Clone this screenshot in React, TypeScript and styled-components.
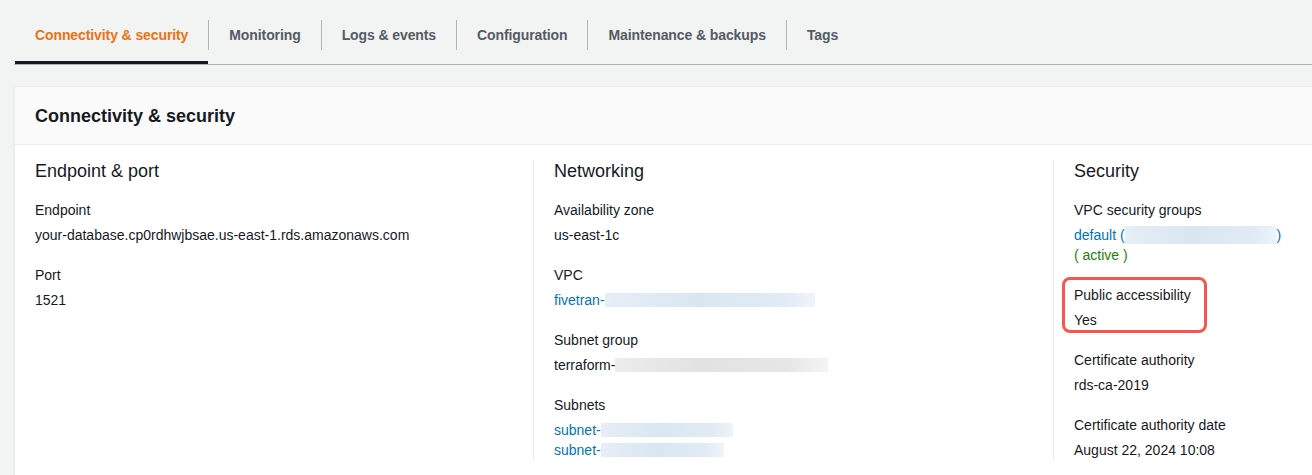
import React from "react";
import styled, { createGlobalStyle } from "styled-components";

const GlobalStyle = createGlobalStyle`
  body {
    margin: 0;
    background: #f2f3f3;
    font-family: "Liberation Sans", Arial, sans-serif;
    color: #16191f;
    overflow: hidden;
  }
`;

const tabs = [
  "Connectivity & security",
  "Monitoring",
  "Logs & events",
  "Configuration",
  "Maintenance & backups",
  "Tags",
];

type Blur = { w: number; h?: number; tone?: "blue" | "gray" };

export default function App() {
  return (
    <>
      <GlobalStyle />
      <Page>
        <TabBar>
          {tabs.map((t, i) => (
            <React.Fragment key={t}>
              {i > 0 && <TabDivider />}
              <Tab active={i === 0}>{t}</Tab>
            </React.Fragment>
          ))}
        </TabBar>

        <Card>
          <CardHeader>
            <CardTitle>Connectivity &amp; security</CardTitle>
          </CardHeader>
          <CardBody>
            <Column>
              <ColumnTitle>Endpoint &amp; port</ColumnTitle>
              <Fields>
                <Field>
                  <Label>Endpoint</Label>
                  <Value>your-database.cp0rdhwjbsae.us-east-1.rds.amazonaws.com</Value>
                </Field>
                <Field>
                  <Label>Port</Label>
                  <Value>1521</Value>
                </Field>
              </Fields>
            </Column>

            <Column divided>
              <ColumnTitle>Networking</ColumnTitle>
              <Fields>
                <Field>
                  <Label>Availability zone</Label>
                  <Value>us-east-1c</Value>
                </Field>
                <Field>
                  <Label>VPC</Label>
                  <Value>
                    <Link>
                      fivetran-
                      <Redacted w={210} />
                    </Link>
                  </Value>
                </Field>
                <Field>
                  <Label>Subnet group</Label>
                  <Value>
                    <Line>
                      terraform-
                      <Redacted w={213} tone="gray" />
                    </Line>
                  </Value>
                </Field>
                <Field>
                  <Label>Subnets</Label>
                  <Value>
                    <Link>
                      subnet-
                      <Redacted w={132} />
                    </Link>
                    <Link>
                      subnet-
                      <Redacted w={123} />
                    </Link>
                  </Value>
                </Field>
              </Fields>
            </Column>

            <Column divided>
              <ColumnTitle>Security</ColumnTitle>
              <Fields>
                <Field>
                  <Label>VPC security groups</Label>
                  <Value>
                    <Link>
                      default (
                      <Redacted w={152} h={18} />)
                    </Link>
                    <Status>( active )</Status>
                  </Value>
                </Field>
                <Highlight>
                  <Label>Public accessibility</Label>
                  <Value>Yes</Value>
                </Highlight>
                <Field>
                  <Label>Certificate authority</Label>
                  <Value>rds-ca-2019</Value>
                </Field>
                <Field>
                  <Label>Certificate authority date</Label>
                  <Value>August 22, 2024 10:08</Value>
                </Field>
              </Fields>
            </Column>
          </CardBody>
        </Card>
      </Page>
    </>
  );
}

// --- Styled Components ---
const Page = styled.div`
  padding-left: 14px;
  overflow: hidden;
`;

const TabBar = styled.div`
  display: flex;
  align-items: flex-start;
  height: 65px;
  box-sizing: border-box;
  padding-left: 1px;
  border-bottom: 1px solid #aab7b8;
`;

const Tab = styled.div<{ active?: boolean }>`
  box-sizing: border-box;
  height: 64px;
  padding: 25px 20px 0 20px;
  font-size: 14px;
  line-height: 20px;
  font-weight: 700;
  letter-spacing: -0.1px;
  white-space: nowrap;
  color: ${(p) => (p.active ? "#ec7211" : "#545b64")};
  border-bottom: 3px solid ${(p) => (p.active ? "#16191f" : "transparent")};
`;

const TabDivider = styled.div`
  width: 1px;
  height: 30px;
  margin-top: 20px;
  background: #aab7b8;
`;

const Card = styled.div`
  margin-top: 21px;
  border-top: 1px solid #eaeded;
  border-left: 1px solid #eaeded;
  box-shadow: 0 1px 1px rgba(0, 28, 36, 0.1);
  background: #fff;
`;

const CardHeader = styled.div`
  display: flex;
  align-items: center;
  height: 57px;
  padding: 0 20px;
  background: #fafafa;
  border-bottom: 1px solid #eaeded;
`;

const CardTitle = styled.h2`
  margin: 0;
  font-size: 18px;
  line-height: 22px;
  font-weight: 700;
`;

const CardBody = styled.div`
  display: grid;
  grid-template-columns: 518px 520px 1fr;
  padding-bottom: 15px;
`;

const Column = styled.div<{ divided?: boolean }>`
  margin-top: 15px;
  padding: 0 20px;
  min-height: 300px;
  border-left: ${(p) => (p.divided ? "1px solid #eaeded" : "none")};
`;

const ColumnTitle = styled.h3`
  margin: 0 0 18px 0;
  font-size: 18px;
  line-height: 22px;
  font-weight: 400;
`;

const Fields = styled.div`
  display: flex;
  flex-direction: column;
  align-items: flex-start;
  gap: 20px;
`;

const Field = styled.div`
  display: flex;
  flex-direction: column;
`;

const Highlight = styled(Field)`
  border: 3px solid #f4574b;
  border-radius: 8px;
  padding: 5px 13px 0 9px;
  margin: -8px 0 -3px -12px;
`;

const Label = styled.div`
  font-size: 14px;
  line-height: 20px;
`;

const Value = styled.div`
  margin-top: 5px;
  font-size: 14px;
  line-height: 20px;
  display: flex;
  flex-direction: column;
  align-items: flex-start;
`;

const Line = styled.span`
  white-space: nowrap;
`;

const Link = styled(Line)`
  color: #0073bb;
`;

const Status = styled.span`
  color: #1d8102;
`;

const Redacted = styled.span<Blur>`
  display: inline-block;
  width: ${(p) => p.w}px;
  height: ${(p) => p.h ?? 14}px;
  vertical-align: ${(p) => (p.h ? -4 : -2)}px;
  background: ${(p) =>
    p.tone === "gray"
      ? "linear-gradient(90deg, #ececec, #e2e2e2 40%, #e6e6e6 80%, #f4f4f4)"
      : "linear-gradient(90deg, #e6eef6, #d9e6f2 45%, #e1ebf5 85%, #eef4f9)"};
`;
